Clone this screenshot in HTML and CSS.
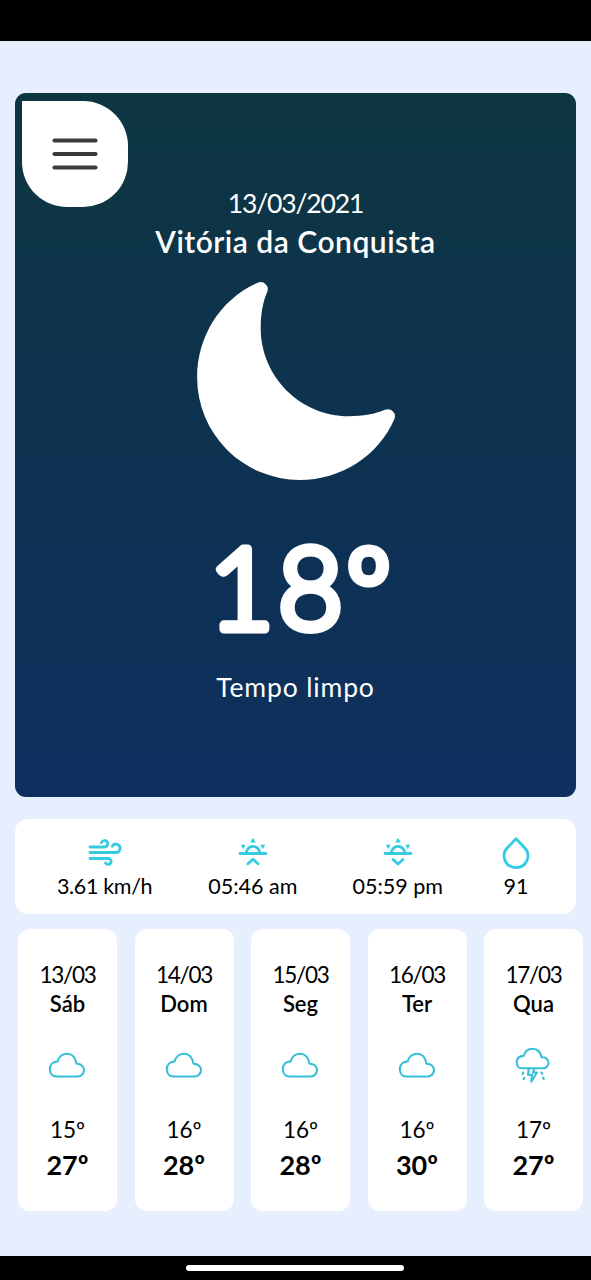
FILE: index.html
```html
<!DOCTYPE html>
<html lang="pt-BR">
<head>
<meta charset="utf-8">
<title>Clima</title>
<link rel="stylesheet" href="styles.css">
</head>
<body>
<svg class="defs" aria-hidden="true">
  <symbol id="cloud" viewBox="0 0 38 38"><path d="M8.500 31.500h21a6.300 6.300 0 0 0 .4-12.600l-1.600-.4C27.700 12.500 24 8.700 19.300 8.700c-4.700 0-8.600 3-9.500 7.700-5 .2-8 3.300-8 7.600 0 4.500 2.700 7.500 6.700 7.500z"/></symbol>
  <symbol id="storm" viewBox="0 0 38 38"><path d="M7.800 23.300h21.200a5.500 5.500 0 0 0 0-11l-1.500-.2C27 7.200 23.200 3.800 18.700 3.800c-4.500 0-8 2.800-8.900 7.100C5.300 11 2.700 13.600 2.700 17.300c0 3.500 2.100 6 5.100 6z"/><path d="M14.800 23.500l-.8 6.300h4l-.7 7 5.700-9.300h-4l1.500-4M9.300 27.500l-.6 1.600M10.200 32.800l-.7 1.300M27.500 27.500l.7 1.400M29.200 32.500l.6 1.500"/></symbol>
  <symbol id="sun" viewBox="0 0 34 34"><path fill="none" stroke="currentColor" stroke-width="2.800" d="M4 18.500h26M10.400 18a6.600 6.600 0 0 1 13.200 0"/><path fill="currentColor" stroke="none" d="M14.200 7.500L17 2.800l2.800 4.700zM4.800 9.700h4.800l-2.400 4.600zM29.200 9.700h-4.800l2.400 4.600z"/></symbol>
</svg>
<div class="status-bar"></div>
<main class="screen">
  <section class="current">
    <button class="menu" aria-label="Menu"><svg viewBox="0 0 46 34"><path d="M2.500 3.500h41M2.500 17h41M2.500 30.500h41"/></svg></button>
    <div class="date">13/03/2021</div>
    <h1 class="city">Vitória da Conquista</h1>
    <svg class="moon" viewBox="0 0 512 512"><path d="M264 480A232 232 0 0 1 32 248c0-94 54-178.280 137.610-214.670a16 16 0 0 1 21.060 21.060C181.070 76.430 176 104.660 176 136c0 110.280 89.720 200 200 200 31.340 0 59.570-5.070 81.610-14.670a16 16 0 0 1 21.060 21.060C442.280 426 358 480 264 480z"/></svg>
    <svg class="temperature" viewBox="0 0 240 170"><text x="33 102 170" y="123.500">18º</text></svg>
    <div class="condition">Tempo limpo</div>
  </section>
  <section class="stats">
    <div class="stat wind"><svg class="line-icon" viewBox="0 0 34 34"><path d="M2 12h14.500a3.200 3.200 0 1 0-3-4.500M2 17.500h26a4.200 4.200 0 1 0-3.800-6.200M2 23.500h18.500a3 3 0 1 1-3 4.500"/></svg><span>3.61 km/h</span></div>
    <div class="stat sunrise"><svg class="sun-icon" viewBox="0 0 34 34"><use href="#sun"/><path d="M12 28.800l5-4.500 5 4.500"/></svg><span>05:46 am</span></div>
    <div class="stat sunset"><svg class="sun-icon" viewBox="0 0 34 34"><use href="#sun"/><path d="M12 24.500l5 4.500 5-4.500"/></svg><span>05:59 pm</span></div>
    <div class="stat humidity"><svg class="line-icon" viewBox="0 0 34 34"><path d="M17 3.700L8.400 12.800C1.500 20 6 32.500 17 32.500s15.500-12.500 8.600-19.700z"/></svg><span>91</span></div>
  </section>
  <section class="forecast">
    <article class="day"><span class="day-date">13/03</span><strong class="day-name">Sáb</strong><svg class="weather"><use href="#cloud"/></svg><span class="low">15º</span><strong class="high">27º</strong></article>
    <article class="day"><span class="day-date">14/03</span><strong class="day-name">Dom</strong><svg class="weather"><use href="#cloud"/></svg><span class="low">16º</span><strong class="high">28º</strong></article>
    <article class="day"><span class="day-date">15/03</span><strong class="day-name">Seg</strong><svg class="weather"><use href="#cloud"/></svg><span class="low">16º</span><strong class="high">28º</strong></article>
    <article class="day"><span class="day-date">16/03</span><strong class="day-name">Ter</strong><svg class="weather"><use href="#cloud"/></svg><span class="low">16º</span><strong class="high">30º</strong></article>
    <article class="day"><span class="day-date">17/03</span><strong class="day-name">Qua</strong><svg class="weather"><use href="#storm"/></svg><span class="low">17º</span><strong class="high">27º</strong></article>
  </section>
</main>
<footer class="home-bar"><div class="home-indicator"></div></footer>
</body>
</html>
```
FILE: styles.css
```css
* { box-sizing: border-box; }
body {
  margin: 0;
  height: 1280px;
  display: flex;
  flex-direction: column;
  overflow: hidden;
  background: #e7eefe;
  color: #000;
  font-family: Lato, "Open Sans", sans-serif;
}
.defs { position: absolute; width: 0; height: 0; }
.status-bar { height: 41px; flex: none; background: #000; }
.screen { flex: 1; padding: 52px 0 0 15px; }
.current {
  position: relative;
  width: 561px;
  height: 703.500px;
  padding-top: 93px;
  display: flex;
  flex-direction: column;
  align-items: center;
  border-radius: 11px;
  background: linear-gradient(#0d3641, #0e2f5f);
  color: #fff;
}
.menu {
  position: absolute;
  left: 7px;
  top: 8px;
  width: 106px;
  height: 106px;
  padding: 0;
  border: 0;
  border-radius: 0 45px 45px 45px;
  background: #fff;
  display: grid;
  place-items: center;
}
.menu svg { width: 46px; height: 34px; fill: none; stroke: #3b3b3d; stroke-width: 4.200; stroke-linecap: round; }
.date { height: 34px; line-height: 34px; font-size: 26.500px; letter-spacing: -1.150px; }
.city { margin: 1px 0 0; height: 40px; line-height: 40px; font-size: 30px; font-weight: 600; letter-spacing: 0.500px; }
.moon { width: 226px; height: 226px; margin: 7px 0 0; flex: none; fill: #fff; }
.temperature { width: 240px; height: 170px; margin: 11px 0 -5px; flex: none; }
.temperature text { font-size: 112px; font-weight: 300; fill: #fff; stroke: #fff; stroke-width: 9; stroke-linejoin: round; }
.condition { height: 34px; line-height: 34px; font-size: 26.500px; letter-spacing: 0.850px; }
.stats {
  width: 561px;
  height: 95px;
  margin-top: 22.500px;
  padding: 16px 47px 0 42px;
  display: flex;
  justify-content: space-between;
  border-radius: 13px;
  background: #fff;
}
.stat { display: flex; flex-direction: column; align-items: center; font-size: 21.500px; line-height: 34px; white-space: nowrap; }
.wind { letter-spacing: -0.350px; }
.sunrise { margin-right: -1px; }
.sunset { margin-right: 4px; }
.stat svg { width: 34px; height: 34px; fill: none; stroke: #35cbe0; color: #35cbe0; stroke-width: 2.800; stroke-linecap: round; stroke-linejoin: round; }
.humidity { width: 26px; }
.humidity svg { flex: none; }
.forecast { display: flex; gap: 17.500px; margin: 15px 0 0 3px; }
.day {
  width: 99px;
  height: 282px;
  padding-top: 31px;
  flex: none;
  display: flex;
  flex-direction: column;
  align-items: center;
  border-radius: 12px;
  background: #fff;
}
.day-date, .low { height: 30px; font-size: 22.500px; line-height: 30px; letter-spacing: -1.300px; }
.day-name { height: 28px; font-size: 22px; line-height: 28px; font-weight: 600; }
.weather { width: 38px; height: 38px; margin: 27px 1px 32px 0; fill: none; stroke: #35bfd8; stroke-width: 2.100; stroke-linejoin: round; stroke-linecap: round; }
.low { letter-spacing: 0; }
.high { height: 40px; font-size: 27px; line-height: 40px; font-weight: 700; }
.home-bar { height: 24px; flex: none; display: flex; justify-content: center; padding: 9px 1px 0 0; background: #000; }
.home-indicator { width: 218px; height: 6px; border-radius: 3px; background: #fff; }
```
